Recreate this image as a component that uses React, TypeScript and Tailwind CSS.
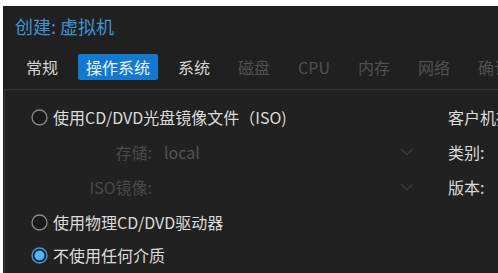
import React from "react";

const font = { fontFamily: '"Noto Sans CJK SC", "Noto Sans", sans-serif' };

function Radio({ checked, label }: { checked?: boolean; label: string }) {
  return (
    <div className="flex items-center gap-[5px] h-[20px]">
      <svg width="17" height="17" viewBox="0 0 17 17" className="shrink-0">
        {checked ? (
          <>
            <circle cx="8.5" cy="8.5" r="7.5" fill="#1b1b1b" stroke="#3f9be0" strokeWidth="1.4" />
            <circle cx="8.5" cy="8.5" r="5" fill="#4cb6ff" />
          </>
        ) : (
          <circle cx="8.5" cy="8.5" r="7.5" fill="#1a1a1a" stroke="#8a8a8a" strokeWidth="1.3" />
        )}
      </svg>
      <span className="text-[16px] text-[#dcdcdc] leading-none">{label}</span>
    </div>
  );
}

function Chevron() {
  return (
    <svg width="14" height="8" viewBox="0 0 14 8" className="shrink-0">
      <path d="M1 1l6 5.5L13 1" fill="none" stroke="#3a3a3a" strokeWidth="1.3" />
    </svg>
  );
}

function SelectRow({ label, value }: { label: string; value?: string }) {
  return (
    <div className="flex items-center h-[20px]">
      <span className="w-[121px] text-right text-[16px] text-[#4a4a4a] leading-none">{label}</span>
      <div className="ml-[12px] w-[253px] flex items-center justify-between pr-[3px]">
        <span className="text-[16px] text-[#535353] leading-none">{value}</span>
        <Chevron />
      </div>
    </div>
  );
}

const tabs = [
  { name: "常规", state: "on" },
  { name: "操作系统", state: "active" },
  { name: "系统", state: "on" },
  { name: "磁盘", state: "off" },
  { name: "CPU", state: "off" },
  { name: "内存", state: "off" },
  { name: "网络", state: "off" },
  { name: "确认", state: "off" },
];

export default function App() {
  return (
    <div className="w-[498px] h-[273px] bg-white overflow-hidden pt-[6px] pl-[3px]" style={font}>
      <div className="w-[495px] h-[267px] bg-[#202020] flex flex-col overflow-hidden">
        {/* Title */}
        <div className="h-[39px] flex items-center pl-[12px] shrink-0">
          <span className="text-[18px] text-[#3f95d3] leading-none">创建: 虚拟机</span>
        </div>

        {/* Tabs */}
        <nav className="h-[44px] flex items-center gap-[12px] pl-[15px] shrink-0 whitespace-nowrap">
          {tabs.map((t) => (
            <span
              key={t.name}
              className={`px-[8px] h-[26px] flex items-center rounded-[2px] text-[16px] leading-none shrink-0 ${
                t.state === "active"
                  ? "bg-[#1278d0] text-[#eaf4ff]"
                  : t.state === "on"
                  ? "text-[#d6d6d6]"
                  : "text-[#505050]"
              }`}
            >
              {t.name}
            </span>
          ))}
        </nav>

        {/* Content */}
        <div className="flex-1 flex border-t border-l border-[#343434] bg-[#212121] ml-[1px] pt-[17px] whitespace-nowrap">
          <div className="w-[443px] shrink-0 pl-[26px] flex flex-col gap-[15px]">
            <Radio label="使用CD/DVD光盘镜像文件（ISO)" />
            <SelectRow label="存储:" value="local" />
            <SelectRow label="ISO镜像:" />
            <Radio label="使用物理CD/DVD驱动器" />
            <div className="-mt-[2px]">
              <Radio checked label="不使用任何介质" />
            </div>
          </div>
          <div className="flex flex-col gap-[15px] text-[16px] text-[#dcdcdc]">
            <span className="h-[20px] flex items-center leading-none">客户机操作系统:</span>
            <span className="h-[20px] flex items-center leading-none">类别:</span>
            <span className="h-[20px] flex items-center leading-none">版本:</span>
          </div>
        </div>
      </div>
    </div>
  );
}
